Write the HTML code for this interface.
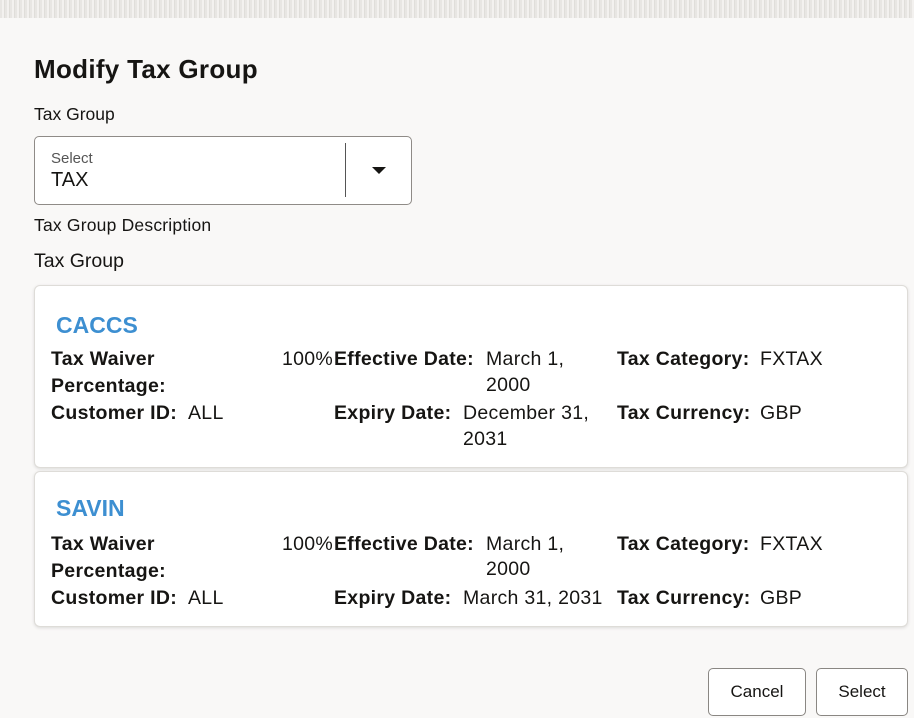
<!DOCTYPE html>
<html><head><style>
body{margin:0;width:914px;height:718px;background:#f9f8f7;font-family:"Liberation Sans",sans-serif;color:#161513;position:relative;overflow:hidden}
.a{position:absolute;white-space:nowrap}
.top{position:absolute;left:0;top:0;width:914px;height:18px;background:repeating-linear-gradient(90deg,#e8e6e3 0 2px,#f3f1ef 2px 4px,#e0deda 4px 5px)}
.card{position:absolute;left:34px;width:872px;background:#fff;border:1px solid #dedcd8;border-radius:6px;box-shadow:0 1px 3px rgba(0,0,0,.12)}
.t{color:#3d8fd1;font-weight:bold;font-size:23px}
.b{font-weight:bold;font-size:19.5px;letter-spacing:.3px}
.v{font-size:19.5px;letter-spacing:.3px}
.btn{position:absolute;top:668px;height:46px;border:1px solid #8a8783;border-radius:5px;background:#fff;font-size:17px;display:flex;align-items:center;justify-content:center}
</style></head><body>
<div class="top"></div>
<div class="a" style="left:34px;top:54px;font-size:26px;font-weight:bold;letter-spacing:.3px">Modify Tax Group</div>
<div class="a" style="left:34px;top:104px;font-size:17.5px">Tax Group</div>
<div style="position:absolute;left:34px;top:136px;width:376px;height:67px;border:1px solid #8f8b87;border-radius:5px;background:#fff">
<div class="a" style="left:16px;top:13px;font-size:15px;color:#555">Select</div>
<div class="a" style="left:16px;top:32px;font-size:20px">TAX</div>
<div style="position:absolute;left:310px;top:6px;width:1px;height:54px;background:#555"></div>
<div style="position:absolute;left:337px;top:30px;width:0;height:0;border-left:7px solid transparent;border-right:7px solid transparent;border-top:7px solid #161513"></div>
</div>
<div class="a" style="left:34px;top:215px;font-size:17.5px;letter-spacing:.2px">Tax Group Description</div>
<div class="a" style="left:34px;top:250px;font-size:19.5px">Tax Group</div>

<div class="card" style="top:285px;height:181px">
<div class="a t" style="left:21px;top:26px">CACCS</div>
<div class="a b" style="left:16px;top:62px">Tax Waiver</div>
<div class="a b" style="left:16px;top:89px">Percentage:</div>
<div class="a v" style="left:247px;top:62px">100%</div>
<div class="a b" style="left:299px;top:62px">Effective Date:</div>
<div class="a v" style="left:451px;top:62px">March 1,</div>
<div class="a v" style="left:451px;top:88px">2000</div>
<div class="a b" style="left:582px;top:62px">Tax Category:</div>
<div class="a v" style="left:725px;top:62px">FXTAX</div>
<div class="a b" style="left:16px;top:116px">Customer ID:</div>
<div class="a v" style="left:153px;top:116px">ALL</div>
<div class="a b" style="left:299px;top:116px">Expiry Date:</div>
<div class="a v" style="left:428px;top:116px">December 31,</div>
<div class="a v" style="left:428px;top:142px">2031</div>
<div class="a b" style="left:582px;top:116px">Tax Currency:</div>
<div class="a v" style="left:725px;top:116px">GBP</div>
</div>

<div class="card" style="top:471px;height:154px">
<div class="a t" style="left:21px;top:23px">SAVIN</div>
<div class="a b" style="left:16px;top:61px">Tax Waiver</div>
<div class="a b" style="left:16px;top:88px">Percentage:</div>
<div class="a v" style="left:247px;top:61px">100%</div>
<div class="a b" style="left:299px;top:61px">Effective Date:</div>
<div class="a v" style="left:451px;top:61px">March 1,</div>
<div class="a v" style="left:451px;top:86px">2000</div>
<div class="a b" style="left:582px;top:61px">Tax Category:</div>
<div class="a v" style="left:725px;top:61px">FXTAX</div>
<div class="a b" style="left:16px;top:115px">Customer ID:</div>
<div class="a v" style="left:153px;top:115px">ALL</div>
<div class="a b" style="left:299px;top:115px">Expiry Date:</div>
<div class="a v" style="left:428px;top:115px">March 31, 2031</div>
<div class="a b" style="left:582px;top:115px">Tax Currency:</div>
<div class="a v" style="left:725px;top:115px">GBP</div>
</div>

<div class="btn" style="left:708px;width:96px">Cancel</div>
<div class="btn" style="left:816px;width:90px">Select</div>
</body></html>
